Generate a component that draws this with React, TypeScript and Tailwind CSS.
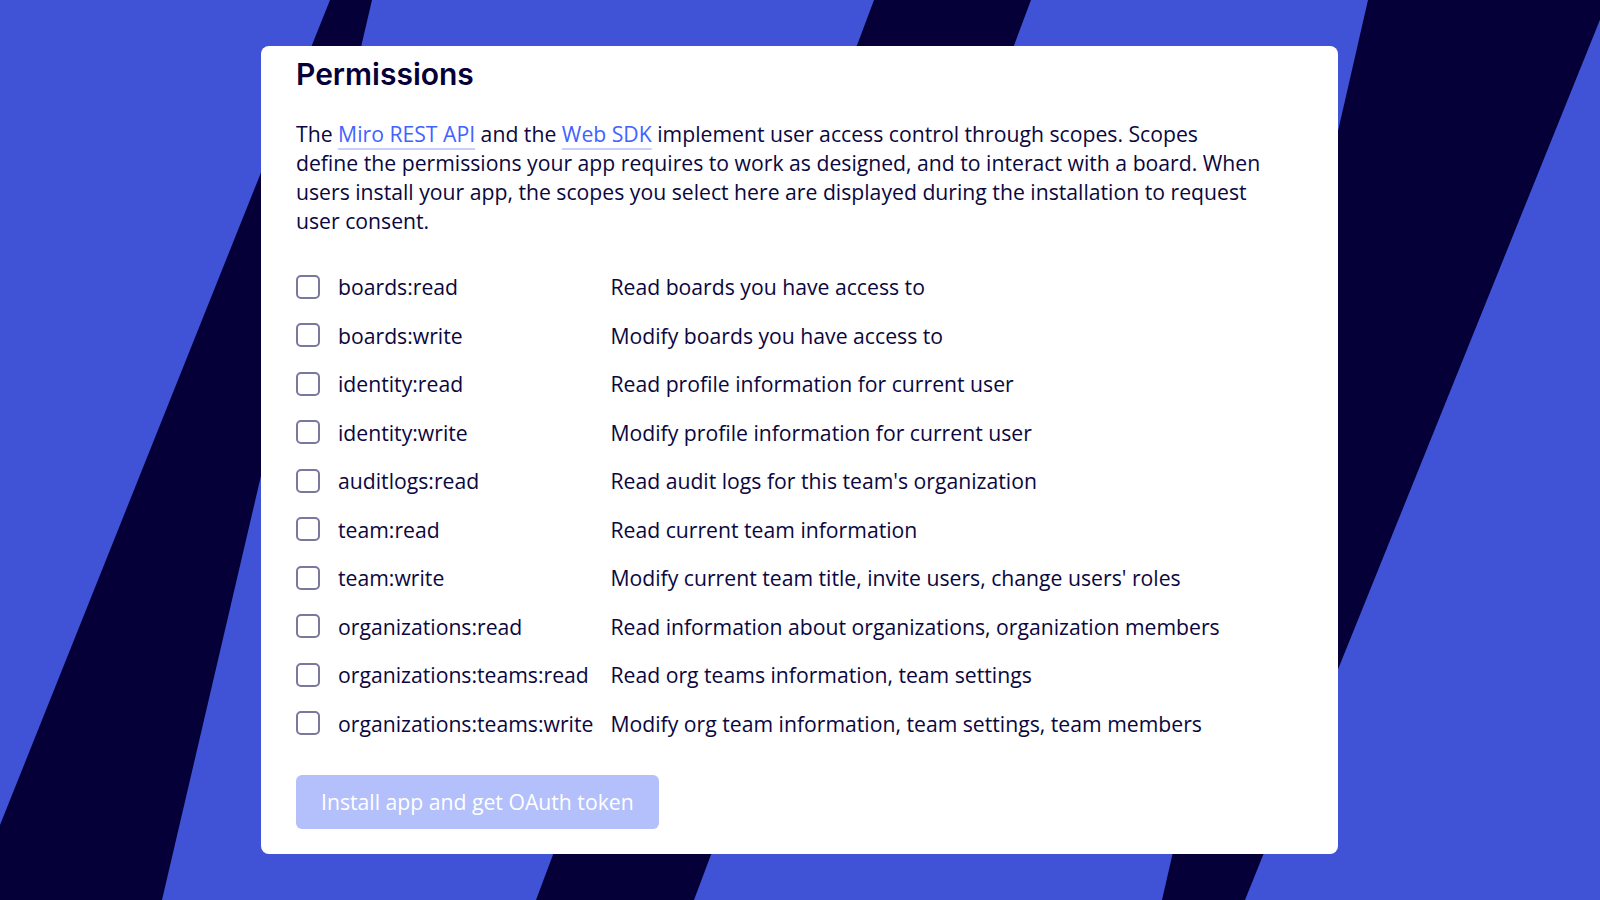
import React from "react";

const scopes: [string, string][] = [
  ["boards:read", "Read boards you have access to"],
  ["boards:write", "Modify boards you have access to"],
  ["identity:read", "Read profile information for current user"],
  ["identity:write", "Modify profile information for current user"],
  ["auditlogs:read", "Read audit logs for this team's organization"],
  ["team:read", "Read current team information"],
  ["team:write", "Modify current team title, invite users, change users' roles"],
  ["organizations:read", "Read information about organizations, organization members"],
  ["organizations:teams:read", "Read org teams information, team settings"],
  ["organizations:teams:write", "Modify org team information, team settings, team members"],
];

function Background() {
  return (
    <svg
      className="absolute inset-0 h-full w-full"
      viewBox="0 0 1600 900"
      preserveAspectRatio="none"
      aria-hidden="true"
    >
      <rect x="0" y="0" width="1600" height="900" fill="#4053d7" />
      <polygon points="330,0 372,0 162,900 -30,900" fill="#050038" />
      <polygon points="874,0 1031,0 694,900 536,900" fill="#050038" />
      <polygon points="1368,0 1608,0 1245,900 1162,900" fill="#050038" />
    </svg>
  );
}

export default function App() {
  return (
    <div className="relative h-[900px] w-full overflow-hidden bg-[#4053d7] font-['Open_Sans',sans-serif]">
      <Background />
      <div className="relative flex pt-[46px] pl-[261px]">
        <div className="w-[1077px] rounded-lg bg-white pl-[35px] pr-[35px] pt-[10px] pb-[25px] text-[#050038]">
          <h1 className="font-['Inter',sans-serif] text-[30px] font-semibold leading-[36px] text-[#050038]">
            Permissions
          </h1>
          <p className="mt-[27px] w-[966px] text-[21.2px] leading-[29px] text-[#0b0740]">
            The{" "}
            <a className="text-[#4262ff] underline decoration-[#c9d0f7] decoration-[1.5px] underline-offset-[6px]">
              Miro REST API
            </a>{" "}
            and the{" "}
            <a className="text-[#4262ff] underline decoration-[#c9d0f7] decoration-[1.5px] underline-offset-[6px]">
              Web SDK
            </a>{" "}
            implement user access control through scopes. Scopes define the permissions your app
            requires to work as designed, and to interact with a board. When users install your app,
            the scopes you select here are displayed during the installation to request user consent.
          </p>
          <div className="mt-[27.5px] grid grid-cols-[24px_max-content_1fr] text-[21.2px] leading-[29px] text-[#0b0740]">
            {scopes.map(([code, desc]) => (
              <React.Fragment key={code}>
                <div className="flex h-[48.5px] items-center">
                  <span className="block h-[24px] w-[24px] rounded-[5px] border-2 border-[#7a789c] bg-white" />
                </div>
                <div className="flex h-[48.5px] items-center pl-[18px] pr-[17px]">{code}</div>
                <div className="flex h-[48.5px] items-center">{desc}</div>
              </React.Fragment>
            ))}
          </div>
          <button
            type="button"
            className="mt-[27px] flex h-[54px] items-center rounded-md bg-[#b3c0fb] px-[25px] text-[21.2px] leading-[29px] text-white"
          >
            Install app and get OAuth token
          </button>
        </div>
      </div>
    </div>
  );
}
